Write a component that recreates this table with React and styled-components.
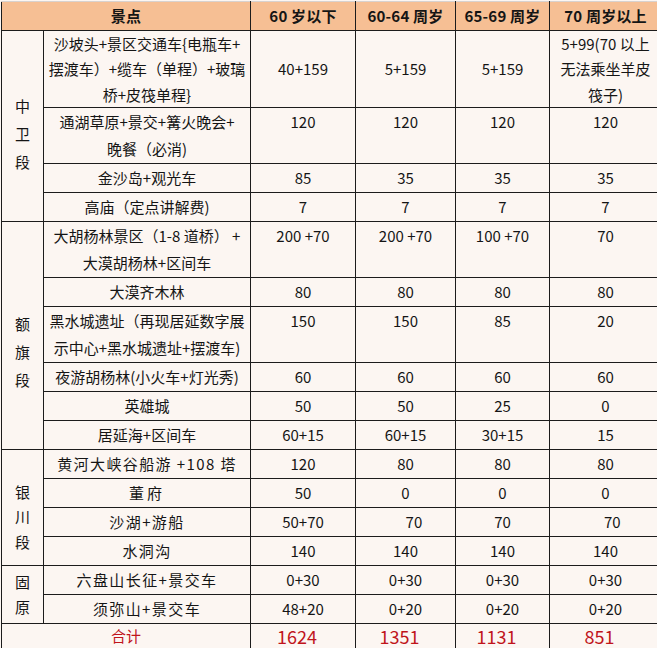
import styled, { createGlobalStyle } from "styled-components"

const GlobalStyle = createGlobalStyle`
  html, body {
    margin: 0;
    padding: 0;
    background: #fcf6f2;
  }
`

const columns = [42, 207, 105, 100, 94, 112]

const rows = [
  {
    group: "中卫段", span: 4, lh: 28, pad: 16,
    spot: ["沙坡头+景区交通车{电瓶车+", "摆渡车）+缆车（单程）+玻璃", "桥+皮筏单程}"],
    vals: ["40+159", "5+159", "5+159", ["5+99(70 以上", "无法乘坐羊皮", "筏子)"]],
    line: 25.33, middle: true,
  },
  { spot: ["通湖草原+景交+篝火晚会+", "晚餐（必消)"], vals: ["120", "120", "120", "120"], line: 27.5 },
  { spot: ["金沙岛+观光车"], vals: ["85", "35", "35", "35"] },
  { spot: ["高庙（定点讲解费)"], vals: ["7", "7", "7", "7"] },
  {
    group: "额旗段", span: 6, lh: 28, pad: 34,
    spot: ["大胡杨林景区（1-8 道桥） +", "大漠胡杨林+区间车"],
    vals: ["200 +70", "200 +70", "100 +70", "70"], line: 27.5,
  },
  { spot: ["大漠齐木林"], vals: ["80", "80", "80", "80"] },
  { spot: ["黑水城遗址（再现居延数字展", "示中心+黑水城遗址+摆渡车)"], vals: ["150", "150", "85", "20"], line: 27.5 },
  { spot: ["夜游胡杨林(小火车+灯光秀)"], vals: ["60", "60", "60", "60"] },
  { spot: ["英雄城"], vals: ["50", "50", "25", "0"] },
  { spot: ["居延海+区间车"], vals: ["60+15", "60+15", "30+15", "15"] },
  {
    group: "银川段", span: 4, lh: 25, pad: 18, spaced: true,
    spot: ["黄河大峡谷船游 +108 塔"], vals: ["120", "80", "80", "80"],
  },
  { spot: ["董府"], vals: ["50", "0", "0", "0"], spaced: true, wide: true },
  { spot: ["沙湖+游船"], vals: ["50+70", "     70", "70", "    70"], spaced: true },
  { spot: ["水洞沟"], vals: ["140", "140", "140", "140"], spaced: true },
  {
    group: "固原", span: 2, lh: 25, pad: 0, spaced: true,
    spot: ["六盘山长征+景交车"], vals: ["0+30", "0+30", "0+30", "0+30"],
  },
  { spot: ["须弥山+景交车"], vals: ["48+20", "0+20", "0+20", "0+20"], spaced: true },
]

const heads = ["60 岁以下", "60-64 周岁", "65-69 周岁", "70 周岁以上"]
const totals = ["1624", "1351", "1131", "851"]

function Lines({ text }) {
  const list = Array.isArray(text) ? text : [text]
  return list.map((t, i) => (
    <span key={i}>
      {i > 0 && <br />}
      {t}
    </span>
  ))
}

export default function App() {
  return (
    <Page>
      <GlobalStyle />
      <Table>
        <colgroup>
          {columns.map((w, i) => <col key={i} style={{ width: w }} />)}
        </colgroup>
        <thead>
          <tr>
            <HeadCell colSpan={2}>景点</HeadCell>
            {heads.map((h) => <HeadCell key={h}>{h}</HeadCell>)}
          </tr>
        </thead>
        <tbody>
          {rows.map((r, i) => (
            <tr key={i}>
              {r.group && (
                <GroupCell rowSpan={r.span} $lh={r.lh} $pad={r.pad}>
                  <Lines text={r.group.split("")} />
                </GroupCell>
              )}
              <SpotCell $line={r.line} $middle={r.middle} $spaced={r.spaced} $wide={r.wide}>
                <Lines text={r.spot} />
              </SpotCell>
              {r.vals.map((v, j) => (
                <NumCell key={j} $line={r.line} $middle={r.middle}>
                  <Lines text={v} />
                </NumCell>
              ))}
            </tr>
          ))}
          <tr>
            <TotalLabel colSpan={2}>合计</TotalLabel>
            {totals.map((t, j) => <TotalNum key={j}>{t}</TotalNum>)}
          </tr>
        </tbody>
      </Table>
    </Page>
  )
}

const Page = styled.div`
  width: 657px;
  height: 648px;
  overflow: hidden;
  background: #fcf6f2;
  font-family: "Noto Sans CJK SC", "Noto Sans", sans-serif;
  color: #151515;
`

const Table = styled.table`
  width: 660px;
  table-layout: fixed;
  border-collapse: collapse;
  margin-top: 1px;
  margin-left: 1px;

  td, th {
    border: 1px solid #1c1c1c;
    padding: 0;
    text-align: center;
    font-size: 15px;
    white-space: pre;
  }
`

const HeadCell = styled.th`
  background: #f6bf94;
  font-weight: 700;
  line-height: 28px;
  border-top-color: #d8d2cf !important;
  font-size: 15px;
  letter-spacing: 0.2px;
`

const GroupCell = styled.td`
  vertical-align: middle;
  line-height: ${(p) => p.$lh}px;
  padding-top: ${(p) => p.$pad}px !important;
`

const SpotCell = styled.td`
  vertical-align: ${(p) => (p.$middle ? "middle" : "top")};
  line-height: ${(p) => p.$line || 28}px;
  letter-spacing: ${(p) => (p.$wide ? "3px" : p.$spaced ? "1.4px" : "0")};
`

const NumCell = styled.td`
  vertical-align: ${(p) => (p.$middle ? "middle" : "top")};
  line-height: ${(p) => p.$line || 28}px;
`

const TotalLabel = styled.td`
  line-height: 24px;
  color: #c0141b;
  font-size: 15px;
`

const TotalNum = styled.td`
  line-height: 24px;
  color: #c0141b;
  font-size: 18px !important;
  padding-right: 12px !important;
`
